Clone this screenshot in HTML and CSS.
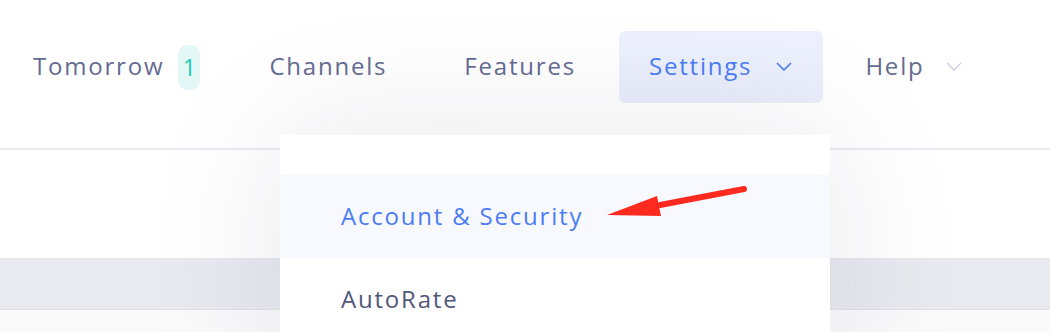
FILE: index.html
```html
<!DOCTYPE html>
<html lang="en">
<head>
<meta charset="utf-8">
<title>Settings menu</title>
<link rel="stylesheet" href="styles.css">
</head>
<body>
<div class="page">
  <header class="topbar">
    <nav class="nav">
      <a class="nav-item tomorrow">Tomorrow<span class="badge">1</span></a>
      <a class="nav-item channels">Channels</a>
      <a class="nav-item features">Features</a>
      <a class="nav-item settings active">Settings<svg class="chev" width="16" height="9" viewBox="0 0 16 9"><path d="M1 1l7 7 7-7" fill="none" stroke="currentColor" stroke-width="1.6"/></svg></a>
      <a class="nav-item help">Help<svg class="chev" width="16" height="9" viewBox="0 0 16 9"><path d="M1 1l7 7 7-7" fill="none" stroke="currentColor" stroke-width="1.4"/></svg></a>
    </nav>
  </header>
  <section class="blank"></section>
  <section class="band"></section>
  <section class="rest"></section>

  <div class="dropdown">
    <div class="dd-item hover">Account &amp; Security</div>
    <div class="dd-item">AutoRate</div>
  </div>

  <svg class="arrow" width="150" height="36" viewBox="0 0 150 36">
    <path d="M139 5 L 55 21" stroke="#ff2a1f" stroke-width="6" stroke-linecap="round" fill="none"/>
    <polygon points="2,31 52,12 56,32" fill="#ff2a1f"/>
  </svg>
</div>
</body>
</html>
```
FILE: styles.css
```css
* { box-sizing: border-box; }
html, body { margin: 0; padding: 0; }
body {
  background: #ffffff;
  font-family: "Open Sans", "DejaVu Sans", sans-serif;
  width: 1050px;
  height: 332px;
  overflow: hidden;
}
.page {
  position: relative;
  width: 1050px;
  height: 332px;
  overflow: hidden;
}
.topbar {
  height: 150px;
  border-bottom: 2px solid #ebebf3;
  padding-top: 31px;
}
.nav {
  display: flex;
  align-items: center;
  height: 72px;
  padding-left: 33px;
}
.nav-item {
  display: flex;
  align-items: center;
  height: 72px;
  padding-bottom: 4px;
  font-size: 24px;
  font-weight: 500;
  color: #646c92;
  letter-spacing: 1.8px;
  text-decoration: none;
  white-space: nowrap;
}
.badge {
  display: inline-flex;
  align-items: center;
  justify-content: center;
  width: 22px;
  height: 45px;
  margin-left: 14px;
  margin-top: 4px;
  border-radius: 9px;
  background: #e3f8f6;
  color: #1ccdb0;
  font-size: 23px;
  letter-spacing: 0;
}
.channels { margin-left: 69px; }
.features { margin-left: 77px; }
.settings {
  margin-left: 43px;
  padding: 0 31px 4px 30px;
  border-radius: 7px;
  background: linear-gradient(180deg, #eef1fd 0%, #e9edfb 100%);
  color: #4b7cf6;
}
.chev { margin-top: 2px; }
.settings .chev { margin-left: 24px; color: #4b7cf6; }
.help { margin-left: 42px; }
.help .chev { margin-left: 21px; color: #c9cce3; }

.blank { height: 108px; background: #ffffff; }
.band {
  height: 52px;
  background: #e9e9f0;
  border-bottom: 1px solid #e1e1ea;
}
.rest { height: 30px; background: #fafafb; }

.dropdown {
  position: absolute;
  left: 280px;
  top: 135px;
  width: 550px;
  height: 240px;
  background: #ffffff;
  padding-top: 40px;
  box-shadow: 0 0 140px rgba(30, 30, 70, 0.10);
}
.dd-item {
  height: 83px;
  display: flex;
  align-items: center;
  padding-left: 61px;
  padding-bottom: 2px;
  font-size: 24px;
  color: #50577b;
  letter-spacing: 1.8px;
}
.dd-item.hover {
  background: #f8f9fe;
  color: #4b7cf6;
}
.arrow {
  position: absolute;
  left: 605px;
  top: 184px;
}
```
